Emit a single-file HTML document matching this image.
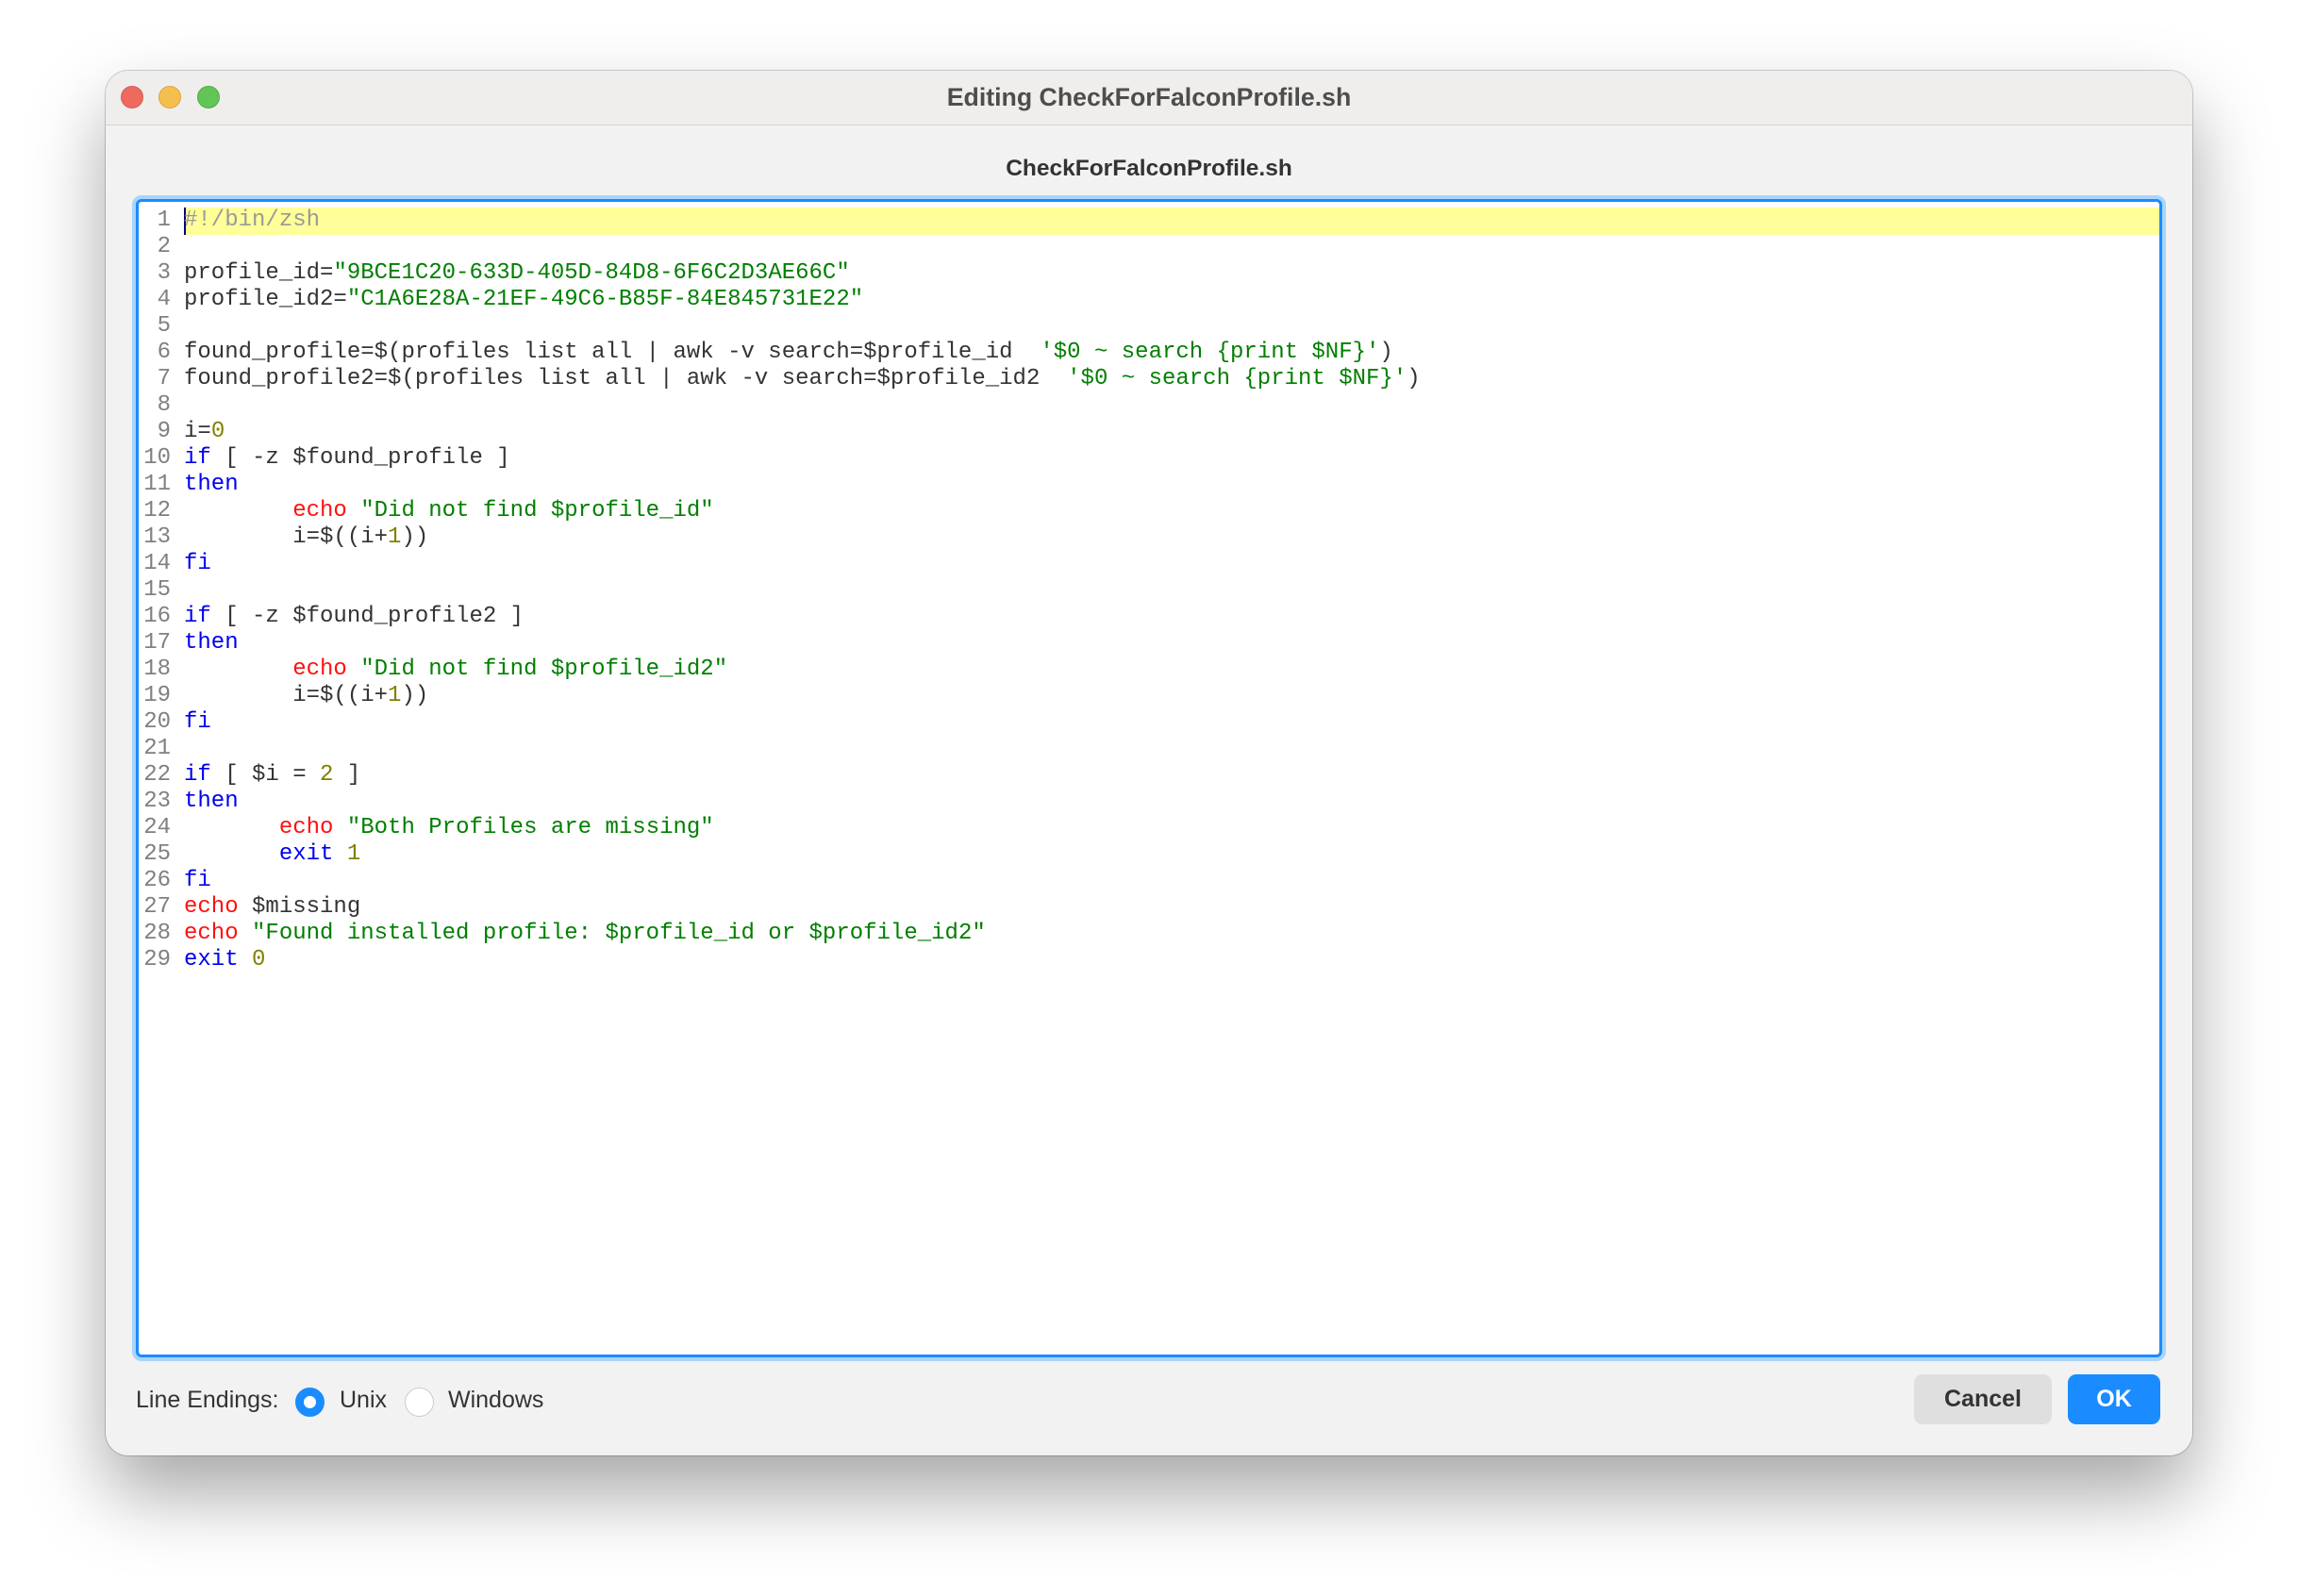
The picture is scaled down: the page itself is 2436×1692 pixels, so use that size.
<!DOCTYPE html>
<html><head><meta charset="utf-8"><style>
html,body{margin:0;padding:0;width:2436px;height:1692px;background:#fff;overflow:hidden;font-family:"Liberation Sans",sans-serif}
.win{position:absolute;left:112px;top:75px;width:2212px;height:1468px;background:#f2f2f2;border-radius:24px;box-shadow:0 40px 80px rgba(0,0,0,0.35),0 0 0 1px rgba(0,0,0,0.18);overflow:hidden}
.tb{position:absolute;left:0;top:0;right:0;height:57px;background:#efeeed;border-bottom:1.5px solid #d6d5d4}
.tl{position:absolute;top:16px;width:24px;height:24px;border-radius:50%}
.title{position:absolute;left:0;right:0;top:13px;text-align:center;font-size:26.7px;font-weight:bold;color:#4d4d4d}
.sub{position:absolute;left:0;right:0;top:90px;text-align:center;font-size:24.5px;font-weight:bold;color:#333}
.ed{position:absolute;left:32px;top:136px;width:2142px;height:1222px;background:#fff;border:3px solid #1a8cff;border-radius:6px;box-shadow:0 0 0 4px #a9d4fb}
.hl{position:absolute;left:48px;right:0;top:6px;height:29px;background:#ffff99}
.cur{position:absolute;left:48px;top:6px;width:2px;height:29px;background:#000080}
pre{position:absolute;margin:0;top:6px;font-family:"Liberation Mono","DejaVu Sans Mono",monospace;font-size:24px;line-height:28px;color:#333}
.ln{left:0;width:34px;text-align:right;color:#808080}
.code{left:48px}
.k{color:#0000ee}.e{color:#ff1010}.s{color:#007f00}.n{color:#808000}.c{color:#999}
.lab{position:absolute;top:1395px;font-size:25px;color:#333}
.radio{position:absolute;top:1396px;width:31px;height:31px;border-radius:50%;box-sizing:border-box}
.btn{position:absolute;top:1382px;height:53px;border-radius:9px;font-size:25px;font-weight:bold;text-align:center;line-height:53px}
</style></head><body>
<div class="win">
<div class="tb">
<div class="tl" style="left:16px;background:#ee6a5f;border:1px solid #d55b50;box-sizing:border-box"></div>
<div class="tl" style="left:56px;background:#f5bf4f;border:1px solid #d9a53e;box-sizing:border-box"></div>
<div class="tl" style="left:97px;background:#62c555;border:1px solid #53a947;box-sizing:border-box"></div>
<div class="title">Editing CheckForFalconProfile.sh</div>
</div>
<div class="sub">CheckForFalconProfile.sh</div>
<div class="ed">
<div class="hl"></div><div class="cur"></div>
<pre class="ln">1
2
3
4
5
6
7
8
9
10
11
12
13
14
15
16
17
18
19
20
21
22
23
24
25
26
27
28
29</pre>
<pre class="code"><span class="c">#!/bin/zsh</span>

profile_id=<span class="s">"9BCE1C20-633D-405D-84D8-6F6C2D3AE66C"</span>
profile_id2=<span class="s">"C1A6E28A-21EF-49C6-B85F-84E845731E22"</span>

found_profile=$(profiles list all | awk -v search=$profile_id  <span class="s">'$0 ~ search {print $NF}'</span>)
found_profile2=$(profiles list all | awk -v search=$profile_id2  <span class="s">'$0 ~ search {print $NF}'</span>)

i=<span class="n">0</span>
<span class="k">if</span> [ -z $found_profile ]
<span class="k">then</span>
        <span class="e">echo</span> <span class="s">"Did not find $profile_id"</span>
        i=$((i+<span class="n">1</span>))
<span class="k">fi</span>

<span class="k">if</span> [ -z $found_profile2 ]
<span class="k">then</span>
        <span class="e">echo</span> <span class="s">"Did not find $profile_id2"</span>
        i=$((i+<span class="n">1</span>))
<span class="k">fi</span>

<span class="k">if</span> [ $i = <span class="n">2</span> ]
<span class="k">then</span>
       <span class="e">echo</span> <span class="s">"Both Profiles are missing"</span>
       <span class="k">exit</span> <span class="n">1</span>
<span class="k">fi</span>
<span class="e">echo</span> $missing
<span class="e">echo</span> <span class="s">"Found installed profile: $profile_id or $profile_id2"</span>
<span class="k">exit</span> <span class="n">0</span></pre>
</div>
<div class="lab" style="left:32px">Line Endings:</div>
<div class="radio" style="left:201px;border:9px solid #1a8cff;background:#fff"></div>
<div class="lab" style="left:248px">Unix</div>
<div class="radio" style="left:317px;border:1.5px solid #ccc;background:#fff"></div>
<div class="lab" style="left:363px">Windows</div>
<div class="btn" style="left:1917px;width:146px;background:#dfdfdf;color:#333">Cancel</div>
<div class="btn" style="left:2080px;width:98px;background:#1a8cff;color:#fff">OK</div>
</div>
</body></html>
